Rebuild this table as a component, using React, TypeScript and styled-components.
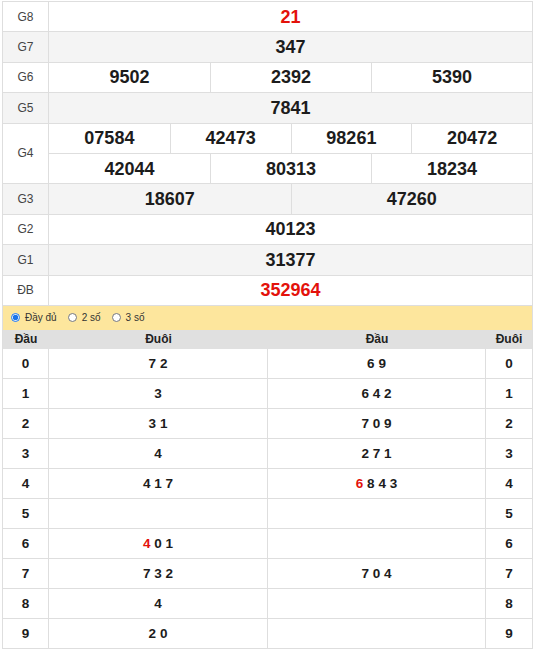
import React from "react";
import styled, { createGlobalStyle } from "styled-components";

const Global = createGlobalStyle`
  html, body { margin: 0; padding: 0; background: #fff; }
  body { font-family: "Liberation Sans", Arial, sans-serif; color: #222; }
  * { box-sizing: border-box; }
`;

const LINE = "#dedede";

const Wrap = styled.div`
  margin: 1px 0 0 2px;
  width: 531px;
`;

const Prizes = styled.div`
  border: 1px solid ${LINE};
  border-bottom: none;
`;

const PrizeRow = styled.div<{ $alt: boolean; $h: number }>`
  display: grid;
  grid-template-columns: 46px 1fr;
  height: ${(p) => p.$h}px;
  background: ${(p) => (p.$alt ? "#f4f4f4" : "#fff")};
  border-bottom: 1px solid ${LINE};
`;

const Label = styled.div`
  display: flex;
  align-items: center;
  justify-content: center;
  border-right: 1px solid ${LINE};
  font-size: 12px;
  color: #444;
`;

const Values = styled.div`
  display: flex;
  flex-direction: column;
`;

const Line = styled.div<{ $cols: number }>`
  flex: 1;
  display: grid;
  grid-template-columns: repeat(${(p) => p.$cols}, 1fr);
  & + & {
    border-top: 1px solid ${LINE};
  }
`;

const Num = styled.div<{ $red?: boolean }>`
  display: flex;
  align-items: center;
  justify-content: center;
  padding-top: 1px;
  font-size: 18px;
  font-weight: bold;
  color: ${(p) => (p.$red ? "#e3120b" : "#1c1c1c")};
  & + & {
    border-left: 1px solid ${LINE};
  }
`;

const Loto = styled.div`
  border-left: 1px solid ${LINE};
  border-right: 1px solid ${LINE};
`;

const ModeBar = styled.div`
  height: 24px;
  background: #fde69d;
  display: flex;
  align-items: center;
  padding-left: 8px;
  gap: 11px;
  font-size: 10px;
  color: #333;
`;

const Mode = styled.label`
  display: flex;
  align-items: center;
  gap: 5px;
`;

const Radio = styled.input`
  width: 9px;
  height: 9px;
  margin: 0;
  accent-color: #1a73e8;
`;

const Grid4 = styled.div`
  display: grid;
  grid-template-columns: 46px 219px 218px 1fr;
`;

const HeadRow = styled(Grid4)`
  height: 19px;
  background: #e0e0e0;
  font-size: 12px;
  font-weight: bold;
  color: #222;
`;

const HeadCell = styled.div`
  display: flex;
  align-items: center;
  justify-content: center;
`;

const BodyRow = styled(Grid4)`
  height: 30px;
  border-bottom: 1px solid ${LINE};
`;

const Cell = styled.div<{ $last?: boolean }>`
  display: flex;
  align-items: center;
  justify-content: center;
  font-size: 13.5px;
  font-weight: bold;
  color: #1c1c1c;
  border-right: ${(p) => (p.$last ? "none" : `1px solid ${LINE}`)};
`;

const Digits = styled.span`
  white-space: pre;
`;

const Red = styled.span`
  color: #e3120b;
`;

type Prize = { label: string; lines: string[][]; red?: boolean };

const prizes: Prize[] = [
  { label: "G8", lines: [["21"]], red: true },
  { label: "G7", lines: [["347"]] },
  { label: "G6", lines: [["9502", "2392", "5390"]] },
  { label: "G5", lines: [["7841"]] },
  {
    label: "G4",
    lines: [
      ["07584", "42473", "98261", "20472"],
      ["42044", "80313", "18234"],
    ],
  },
  { label: "G3", lines: [["18607", "47260"]] },
  { label: "G2", lines: [["40123"]] },
  { label: "G1", lines: [["31377"]] },
  { label: "ĐB", lines: [["352964"]], red: true },
];

type DigitList = { d: string; red?: boolean }[];
const mk = (s: string, redFirst = false): DigitList =>
  s === "" ? [] : s.split(" ").map((d, i) => ({ d, red: redFirst && i === 0 }));

const left: DigitList[] = [
  mk("7 2"),
  mk("3"),
  mk("3 1"),
  mk("4"),
  mk("4 1 7"),
  mk(""),
  mk("4 0 1", true),
  mk("7 3 2"),
  mk("4"),
  mk("2 0"),
];
const right: DigitList[] = [
  mk("6 9"),
  mk("6 4 2"),
  mk("7 0 9"),
  mk("2 7 1"),
  mk("6 8 4 3", true),
  mk(""),
  mk(""),
  mk("7 0 4"),
  mk(""),
  mk(""),
];

const renderDigits = (ds: DigitList) => (
  <Digits>
    {ds.map((x, i) => (
      <React.Fragment key={i}>
        {i > 0 ? " " : ""}
        {x.red ? <Red>{x.d}</Red> : x.d}
      </React.Fragment>
    ))}
  </Digits>
);

export default function App() {
  let alt = false;
  return (
    <>
      <Global />
      <Wrap>
        <Prizes>
          {prizes.map((p) => {
            const rowAlt = alt;
            alt = !alt;
            return (
              <PrizeRow key={p.label} $alt={rowAlt} $h={30.4 * p.lines.length}>
                <Label>{p.label}</Label>
                <Values>
                  {p.lines.map((line, li) => (
                    <Line key={li} $cols={line.length}>
                      {line.map((n) => (
                        <Num key={n} $red={p.red}>
                          {n}
                        </Num>
                      ))}
                    </Line>
                  ))}
                </Values>
              </PrizeRow>
            );
          })}
        </Prizes>
        <Loto>
          <ModeBar>
            <Mode>
              <Radio type="radio" name="mode" defaultChecked />
              Đầy đủ
            </Mode>
            <Mode>
              <Radio type="radio" name="mode" />2 số
            </Mode>
            <Mode>
              <Radio type="radio" name="mode" />3 số
            </Mode>
          </ModeBar>
          <HeadRow>
            <HeadCell>Đầu</HeadCell>
            <HeadCell>Đuôi</HeadCell>
            <HeadCell>Đầu</HeadCell>
            <HeadCell>Đuôi</HeadCell>
          </HeadRow>
          {left.map((l, i) => (
            <BodyRow key={i}>
              <Cell>{i}</Cell>
              <Cell>{renderDigits(l)}</Cell>
              <Cell>{renderDigits(right[i])}</Cell>
              <Cell $last>{i}</Cell>
            </BodyRow>
          ))}
        </Loto>
      </Wrap>
    </>
  );
}
